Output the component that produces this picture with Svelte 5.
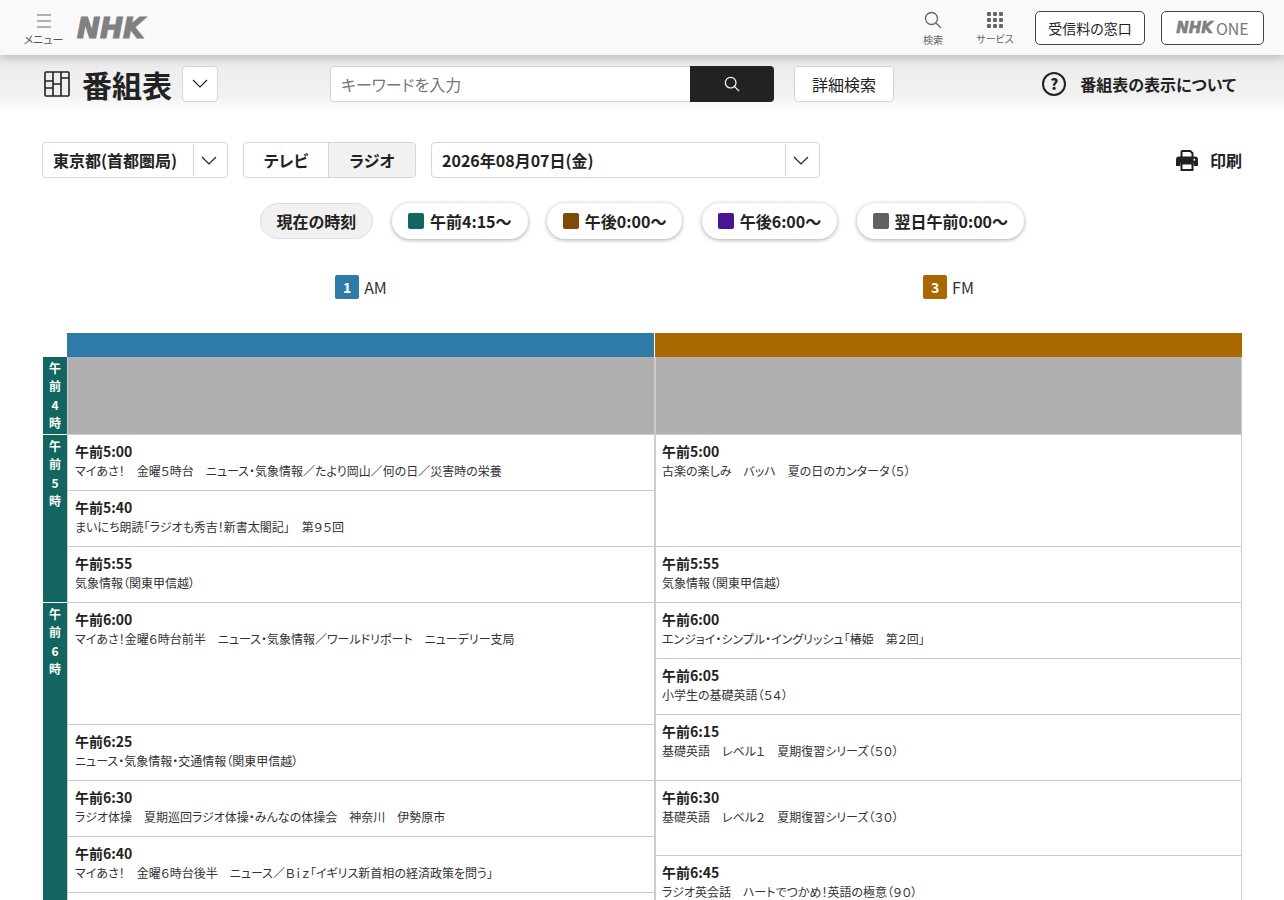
<script lang="ts">
	const chips = [
		{ label: '午前4:15～', color: '#12665f' },
		{ label: '午後0:00～', color: '#7f4a05' },
		{ label: '午後6:00～', color: '#4a1590' },
		{ label: '翌日午前0:00～', color: '#616161' }
	];

	const channels = [
		{ num: '1', name: 'AM', color: '#2e7ba8' },
		{ num: '3', name: 'FM', color: '#a96800' }
	];

	const hours = [
		{ chars: ['午', '前', '4', '時'], h: 78 },
		{ chars: ['午', '前', '5', '時'], h: 168 },
		{ chars: ['午', '前', '6', '時'], h: 340 }
	];

	const am = [
		{ h: 78, off: true },
		{ h: 56, time: '午前5:00', title: 'マイあさ！　金曜５時台　ニュース・気象情報／たより岡山／何の日／災害時の栄養' },
		{ h: 56, time: '午前5:40', title: 'まいにち朗読「ラジオも秀吉！新書太閤記」　第９５回' },
		{ h: 56, time: '午前5:55', title: '気象情報（関東甲信越）' },
		{ h: 122, time: '午前6:00', title: 'マイあさ！金曜６時台前半　ニュース・気象情報／ワールドリポート　ニューデリー支局' },
		{ h: 56, time: '午前6:25', title: 'ニュース・気象情報・交通情報（関東甲信越）' },
		{ h: 56, time: '午前6:30', title: 'ラジオ体操　夏期巡回ラジオ体操・みんなの体操会　神奈川　伊勢原市' },
		{ h: 56, time: '午前6:40', title: 'マイあさ！　金曜６時台後半　ニュース／Ｂｉｚ「イギリス新首相の経済政策を問う」' },
		{ h: 56, time: '', title: '' }
	];

	const fm = [
		{ h: 78, off: true },
		{ h: 112, time: '午前5:00', title: '古楽の楽しみ　バッハ　夏の日のカンタータ（５）' },
		{ h: 56, time: '午前5:55', title: '気象情報（関東甲信越）' },
		{ h: 56, time: '午前6:00', title: 'エンジョイ・シンプル・イングリッシュ「椿姫　第２回」' },
		{ h: 56, time: '午前6:05', title: '小学生の基礎英語（５４）' },
		{ h: 66, time: '午前6:15', title: '基礎英語　レベル１　夏期復習シリーズ（５０）' },
		{ h: 75, time: '午前6:30', title: '基礎英語　レベル２　夏期復習シリーズ（３０）' },
		{ h: 75, time: '午前6:45', title: 'ラジオ英会話　ハートでつかめ！英語の極意（９０）' }
	];

	const columns = [am, fm];
</script>

<header class="top">
	<button class="menu">
		<svg width="14" height="14" viewBox="0 0 14 14" fill="none" stroke="#666" stroke-width="1.2"><path d="M0 1h14M0 7h14M0 13h14" /></svg>
		<span>メニュー</span>
	</button>
	<span class="logo">NHK</span>
	<div class="spacer"></div>
	<button class="tool">
		<svg width="18" height="18" viewBox="0 0 18 18" fill="none" stroke="#666" stroke-width="1.3"><circle cx="7.5" cy="7.5" r="6" /><path d="M12 12l5 5" /></svg>
		<span>検索</span>
	</button>
	<button class="tool">
		<svg width="16" height="16" viewBox="0 0 16 16" fill="#666">
			{#each [0, 6, 12] as y}
				{#each [0, 6, 12] as x}
					<rect {x} {y} width="4" height="4" rx="1" />
				{/each}
			{/each}
		</svg>
		<span>サービス</span>
	</button>
	<button class="outline">受信料の窓口</button>
	<button class="outline one"><span class="logo small">NHK</span><span>ONE</span></button>
</header>

<section class="sub">
	<svg class="grid-icon" width="26" height="26" viewBox="0 0 26 26" fill="none" stroke="#222" stroke-width="1.6">
		<rect x="1" y="1" width="24" height="24" rx="1" />
		<path d="M9 1v24M17 1v24M1 10h8M1 17h8M9 13h8M17 7h8" />
	</svg>
	<h1>番組表</h1>
	<button class="square">
		<svg width="16" height="9" viewBox="0 0 16 9" fill="none" stroke="#222" stroke-width="1.2"><path d="M1 1l7 7 7-7" /></svg>
	</button>
	<div class="search">
		<input placeholder="キーワードを入力" />
		<button aria-label="検索">
			<svg width="16" height="16" viewBox="0 0 18 18" fill="none" stroke="#fff" stroke-width="1.4"><circle cx="7.5" cy="7.5" r="6" /><path d="M12 12l5 5" /></svg>
		</button>
	</div>
	<button class="detail">詳細検索</button>
	<div class="spacer"></div>
	<div class="help">
		<svg width="24" height="24" viewBox="0 0 24 24" fill="none" stroke="#222" stroke-width="2"><circle cx="12" cy="12" r="11" /></svg>
		<b class="q">?</b>
		<span>番組表の表示について</span>
	</div>
</section>

<section class="filters">
	<div class="select area">
		<span>東京都(首都圏局)</span>
		<i><svg width="16" height="9" viewBox="0 0 16 9" fill="none" stroke="#222" stroke-width="1.2"><path d="M1 1l7 7 7-7" /></svg></i>
	</div>
	<div class="seg">
		<span>テレビ</span>
		<span class="on">ラジオ</span>
	</div>
	<div class="select date">
		<span>2026年08月07日(金)</span>
		<i><svg width="16" height="9" viewBox="0 0 16 9" fill="none" stroke="#222" stroke-width="1.2"><path d="M1 1l7 7 7-7" /></svg></i>
	</div>
	<div class="spacer"></div>
	<div class="print">
		<svg width="22" height="21" viewBox="0 0 22 21">
			<path d="M5.500 7V1.800A.8.8 0 0 1 6.300 1h8l2.200 2.200V7" fill="#fff" stroke="#222" stroke-width="2" />
			<path d="M3 6.500h16a3 3 0 0 1 3 3V16h-4.500v-3h-13v3H0V9.500a3 3 0 0 1 3-3z" fill="#222" />
			<path d="M5.500 13.500h11V20h-11z" fill="#fff" stroke="#222" stroke-width="2" />
			<circle cx="18.300" cy="9.800" r="1" fill="#fff" />
		</svg>
		<span>印刷</span>
	</div>
</section>

<nav class="chips">
	<button class="chip now">現在の時刻</button>
	{#each chips as c}
		<button class="chip">
			<i style="background: {c.color}"></i>{c.label}
		</button>
	{/each}
</nav>

<div class="channels">
	{#each channels as ch}
		<div class="ch-name">
			<span class="badge" style="background: {ch.color}">{ch.num}</span>
			<span>{ch.name}</span>
		</div>
	{/each}
</div>

<main class="table">
	<div class="times">
		{#each hours as hr}
			<div class="hour" style="height: {hr.h}px">
				{#each hr.chars as c}<span>{c}</span>{/each}
			</div>
		{/each}
	</div>
	{#each columns as col, i}
		<div class="col">
			<div class="bar" style="background: {channels[i].color}"></div>
			{#each col as p}
				<div class="prog" class:off={p.off} style="height: {p.h}px">
					{#if p.time}
						<b>{p.time}</b>
						<p>{p.title}</p>
					{/if}
				</div>
			{/each}
		</div>
	{/each}
</main>

<style>
	:global(body) {
		margin: 0;
		height: 900px;
		overflow: hidden;
		background: #fff;
		color: #222;
		font-family: "Noto Sans CJK JP", "Noto Sans", sans-serif;
		font-feature-settings: "palt";
	}

	button {
		font-family: inherit;
		font-feature-settings: inherit;
		color: inherit;
		background: none;
		border: 0;
		padding: 0;
	}

	.spacer { flex: 1; }

	.top {
		position: relative;
		z-index: 2;
		display: flex;
		align-items: center;
		height: 55px;
		padding: 0 20px 0 24px;
		box-sizing: border-box;
		background: #f9f9f9;
		box-shadow: 0 2px 10px rgba(0, 0, 0, 0.25);
	}

	.menu {
		display: flex;
		flex-direction: column;
		align-items: center;
		width: 39px;
		gap: 4px;
		padding-top: 5px;
		font-size: 11px;
		line-height: 14px;
		white-space: nowrap;
		color: #555;
	}

	.logo {
		margin: 1px 0 0 14px;
		font-family: "DejaVu Sans", sans-serif;
		font-size: 27.500px;
		font-weight: 700;
		font-style: italic;
		color: #808080;
		-webkit-text-stroke: 1.2px #808080;
	}

	.logo.small {
		margin: 0 3px 0 0;
		font-size: 15px;
		-webkit-text-stroke: 0.6px #808080;
	}

	.tool {
		display: flex;
		flex-direction: column;
		align-items: center;
		gap: 4px;
		padding-top: 2px;
		font-size: 10px;
		line-height: 14px;
		color: #666;
	}

	.tool:nth-of-type(2) { width: 40px; margin-right: 22px; }
	.tool:nth-of-type(3) { width: 40px; margin-right: 20px; }

	.outline {
		width: 110px;
		height: 34px;
		margin-top: 1px;
		border: 1px solid #444;
		border-radius: 5px;
		background: #fff;
		font-size: 14px;
	}

	.one {
		display: flex;
		align-items: center;
		justify-content: center;
		width: 103px;
		margin-left: 16px;
		font-size: 16px;
		color: #777;
	}

	.sub {
		display: flex;
		align-items: center;
		height: 57px;
		padding: 0 48px 0 44px;
		background: linear-gradient(#ececec, #f1f1f1 70%, #fff);
	}

	h1 {
		margin: 0 10px 0 12px;
		font-size: 30px;
		font-weight: 700;
		line-height: 1;
	}

	.square {
		display: flex;
		align-items: center;
		justify-content: center;
		width: 36px;
		height: 36px;
		box-sizing: border-box;
		border: 1px solid #d5d5d5;
		border-radius: 4px;
		background: #fff;
	}

	.search {
		display: flex;
		margin-left: 112px;
		height: 36px;
	}

	.search input {
		width: 360px;
		box-sizing: border-box;
		padding: 0 10px;
		border: 1px solid #d5d5d5;
		border-right: 0;
		border-radius: 4px 0 0 4px;
		background: #fff;
		font-family: inherit;
		font-feature-settings: inherit;
		font-size: 16px;
	}

	.search input::placeholder { color: #777; opacity: 1; }

	.search button {
		display: flex;
		align-items: center;
		justify-content: center;
		width: 84px;
		background: #222;
		border-radius: 0 4px 4px 0;
	}

	.detail {
		width: 100px;
		height: 36px;
		margin-left: 20px;
		border: 1px solid #d5d5d5;
		border-radius: 4px;
		background: #fff;
		font-size: 16px;
	}

	.help {
		position: relative;
		display: flex;
		align-items: center;
		gap: 14px;
		font-size: 16px;
		font-weight: 700;
	}

	.q {
		position: absolute;
		left: 0;
		width: 24px;
		text-align: center;
		font-size: 15px;
	}

	.filters {
		display: flex;
		align-items: center;
		padding: 30px 42px 0;
		font-size: 16px;
		font-weight: 700;
	}

	.select {
		display: flex;
		align-items: center;
		height: 36px;
		box-sizing: border-box;
		border: 1px solid #d5d5d5;
		border-radius: 4px;
		background: #fff;
	}

	.select span { flex: 1; padding-left: 10px; }

	.select i {
		display: flex;
		align-items: center;
		justify-content: center;
		box-sizing: border-box;
		width: 34px;
		height: 32px;
		padding-right: 3px;
		border-left: 1px solid #d5d5d5;
	}

	.area { width: 186px; }
	.date { width: 389px; }

	.seg {
		display: flex;
		width: 173px;
		height: 36px;
		margin: 0 15px;
		box-sizing: border-box;
		border: 1px solid #d5d5d5;
		border-radius: 4px;
		overflow: hidden;
	}

	.seg span {
		flex: 1;
		display: flex;
		align-items: center;
		justify-content: center;
	}

	.seg .on {
		flex: none;
		box-sizing: border-box;
		width: 87px;
		background: #f1f1f1;
		border-left: 1px solid #d5d5d5;
	}

	.print {
		display: flex;
		align-items: center;
		gap: 12px;
	}

	.chips {
		display: flex;
		justify-content: center;
		gap: 19.300px;
		padding: 25px 0 0 0;
	}

	.chip {
		display: flex;
		align-items: center;
		gap: 6px;
		height: 36px;
		padding: 0 16px;
		border-radius: 18px;
		background: #fff;
		box-shadow: 0 1px 4px rgba(0, 0, 0, 0.35);
		font-size: 16px;
		font-weight: 700;
	}

	.chip i {
		width: 16px;
		height: 16px;
		border-radius: 2px;
	}

	.now {
		padding: 0 15.500px;
		background: #f1f1f1;
		box-shadow: none;
		border: 1px solid #ddd;
		box-sizing: border-box;
	}

	.channels {
		display: grid;
		grid-template-columns: 588px 587px;
		padding: 36px 0 0 67px;
	}

	.ch-name {
		display: flex;
		align-items: center;
		justify-content: center;
		gap: 5px;
		height: 24px;
		font-size: 16px;
		color: #333;
	}

	.badge {
		width: 24px;
		height: 24px;
		border-radius: 2px;
		color: #fff;
		text-align: center;
		font-size: 14px;
		font-weight: 700;
		line-height: 24px;
	}

	.table {
		display: flex;
		padding: 34px 42px 0 43px;
	}

	.times {
		width: 24px;
		padding-top: 24px;
	}

	.hour {
		display: flex;
		flex-direction: column;
		align-items: center;
		box-sizing: border-box;
		padding-top: 2px;
		border-bottom: 1px solid #fff;
		background: #12665f;
		color: #fff;
		font-size: 12px;
		font-weight: 700;
		line-height: 18.400px;
	}

	.col {
		flex: 1;
		min-width: 0;
		border-left: 1px solid #ccc;
	}

	.col:nth-of-type(2) { flex: none; width: 587px; }

	.bar {
		height: 24px;
		margin-left: -1px;
	}

	.col:nth-of-type(2) .bar { margin-right: 1px; }

	.prog {
		box-sizing: border-box;
		padding: 6px 7px 0;
		border-bottom: 1px solid #ccc;
		border-right: 1px solid #ccc;
	}

	.col:nth-of-type(3) .prog { padding-left: 6px; }

	.prog.off { background: #b0b0b0; }

	.prog b {
		display: block;
		font-size: 14px;
		font-weight: 700;
		line-height: 20px;
	}

	.prog p {
		margin: 1px 0 0;
		font-size: 12px;
		line-height: 18px;
		color: #333;
	}
</style>
